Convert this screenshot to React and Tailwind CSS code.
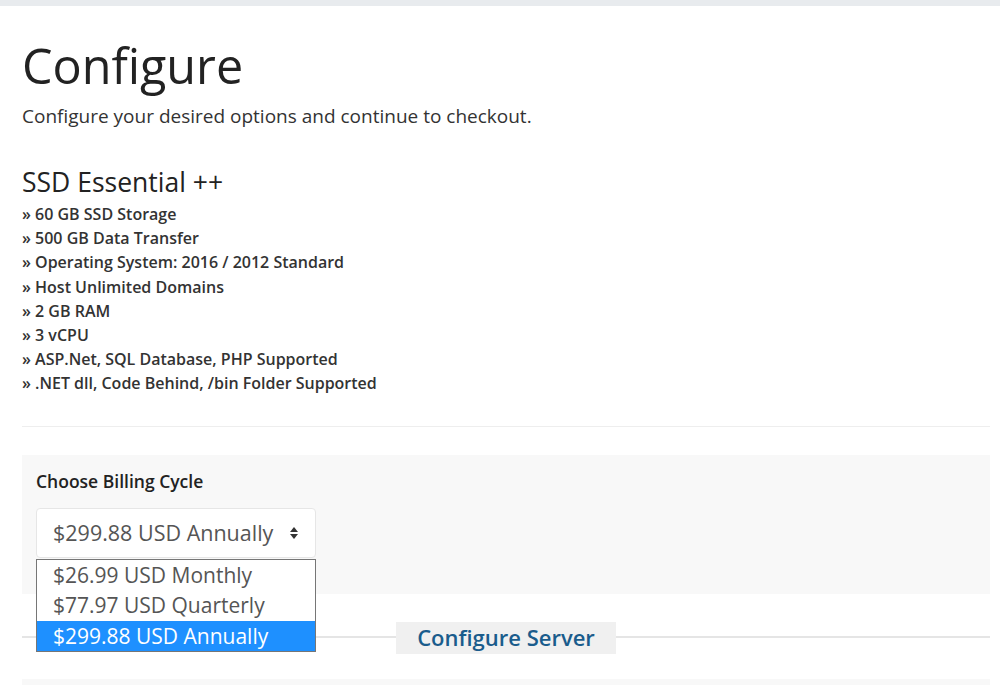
const features = [
  "60 GB SSD Storage",
  "500 GB Data Transfer",
  "Operating System: 2016 / 2012 Standard",
  "Host Unlimited Domains",
  "2 GB RAM",
  "3 vCPU",
  "ASP.Net, SQL Database, PHP Supported",
  ".NET dll, Code Behind, /bin Folder Supported",
];

const cycles = [
  "$26.99 USD Monthly",
  "$77.97 USD Quarterly",
  "$299.88 USD Annually",
];

function SortArrows() {
  return (
    <svg width="10" height="14" viewBox="0 0 10 14" className="text-[#333]">
      <path d="M5 1 L9 6 H1 Z" fill="currentColor" />
      <path d="M5 13 L9 8 H1 Z" fill="currentColor" />
    </svg>
  );
}

export default function App() {
  const selected = 2;
  return (
    <div
      className="min-h-[685px] bg-white text-[#333] overflow-hidden"
      style={{ fontFamily: '"Open Sans", sans-serif' }}
    >
      <div className="h-[6px] bg-[#e8ebee]" />
      <div className="pl-[22px] pr-[10px]">
        <h1 className="mt-[31px] text-[48.5px] leading-[56px] font-normal text-[#222]">
          Configure
        </h1>
        <p className="mt-[9px] text-[19px] leading-[28px] text-[#333]">
          Configure your desired options and continue to checkout.
        </p>

        <h3 className="mt-[37px] text-[26.5px] leading-[30px] font-medium text-[#222]">
          SSD Essential ++
        </h3>
        <ul className="mt-[5px] text-[16px] leading-[24.2px] font-semibold text-[#333]">
          {features.map((f) => (
            <li key={f}>» {f}</li>
          ))}
        </ul>

        <hr className="mt-[30px] border-t border-[#eee]" />

        <div className="relative mt-[28px] bg-[#f8f8f8] px-[14px] pt-[14px] h-[139px]">
          <label className="block text-[17.5px] leading-[24px] font-semibold text-[#222]">
            Choose Billing Cycle
          </label>
          <div className="mt-[15px] w-[280px] h-[50px] bg-white border border-[#e6e6e6] rounded-[4px] flex items-center justify-between pl-[16px] pr-[16px]">
            <span className="text-[21.5px] text-[#555]">{cycles[selected]}</span>
            <SortArrows />
          </div>
          <div className="absolute z-10 left-[14px] top-[104px] w-[280px] bg-white border border-[#767676]">
            {cycles.map((c, i) => (
              <div
                key={c}
                className={
                  i === selected
                    ? "h-[30.5px] leading-[30.5px] pl-[16px] text-[21px] bg-[#1e90ff] text-white"
                    : "h-[30.5px] leading-[30.5px] pl-[16px] text-[21px] text-[#555]"
                }
              >
                {c}
              </div>
            ))}
          </div>
        </div>

        <div className="relative mt-[28px] h-[32px] flex items-center">
          <div className="absolute left-0 right-0 top-[14px] border-t-2 border-[#e5e5e5]" />
          <div className="relative ml-[374px] w-[220px] h-[32px] bg-[#f0f0f0] flex items-center justify-center">
            <span className="text-[22px] font-semibold text-[#1a5c8c]">
              Configure Server
            </span>
          </div>
        </div>

        <div className="mt-[25px] h-[40px] bg-[#f8f8f8]" />
      </div>
    </div>
  );
}
